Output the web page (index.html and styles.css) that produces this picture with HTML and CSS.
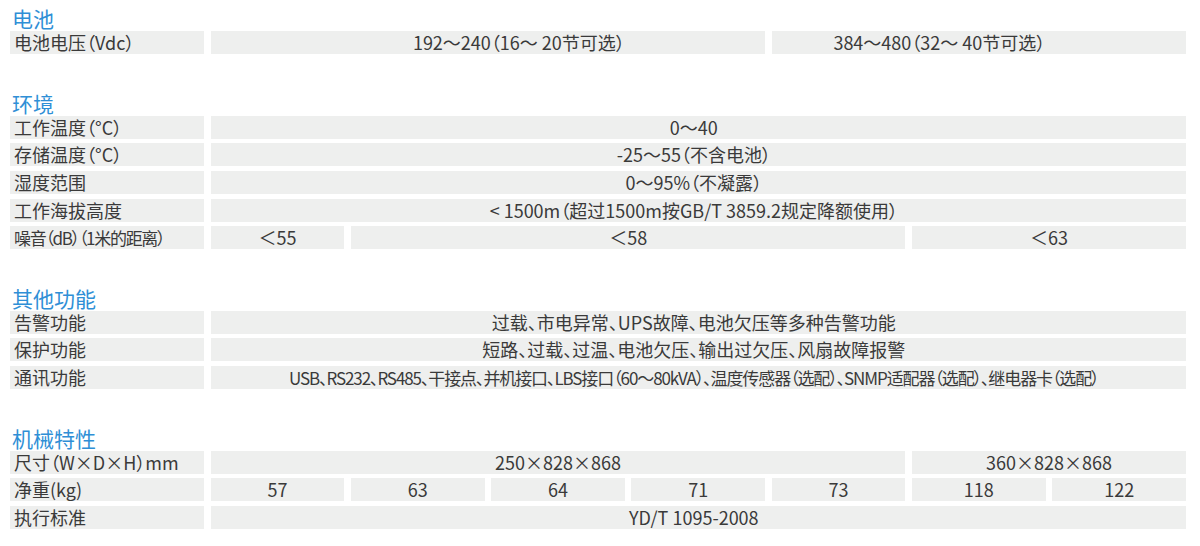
FILE: index.html
```html
<!DOCTYPE html>
<html lang="zh-CN">
<head>
<meta charset="utf-8">
<title>规格参数</title>
<link rel="stylesheet" href="styles.css">
</head>
<body>
<div class="spec">
  <section class="group">
    <h2 class="title">电池</h2>
    <div class="row">
      <div class="label">电池电压（Vdc）</div>
      <div class="cell s4 shift-r">192～240（16～ 20节可选）</div>
      <div class="cell s3 shift-l">384～480（32～ 40节可选）</div>
    </div>
  </section>

  <section class="group">
    <h2 class="title">环境</h2>
    <div class="row">
      <div class="label">工作温度（°C）</div>
      <div class="cell s7 full">0～40</div>
    </div>
    <div class="row">
      <div class="label">存储温度（°C）</div>
      <div class="cell s7 full">-25～55（不含电池）</div>
    </div>
    <div class="row">
      <div class="label">湿度范围</div>
      <div class="cell s7 full">0～95%（不凝露）</div>
    </div>
    <div class="row">
      <div class="label">工作海拔高度</div>
      <div class="cell s7 full">&lt; 1500m（超过1500m按GB/T 3859.2规定降额使用）</div>
    </div>
    <div class="row">
      <div class="label compact">噪音（dB）（1米的距离）</div>
      <div class="cell s1">＜55</div>
      <div class="cell s4">＜58</div>
      <div class="cell s2">＜63</div>
    </div>
  </section>

  <section class="group">
    <h2 class="title">其他功能</h2>
    <div class="row">
      <div class="label">告警功能</div>
      <div class="cell s7 full">过载、市电异常、UPS故障、电池欠压等多种告警功能</div>
    </div>
    <div class="row">
      <div class="label">保护功能</div>
      <div class="cell s7 full">短路、过载、过温、电池欠压、输出过欠压、风扇故障报警</div>
    </div>
    <div class="row">
      <div class="label">通讯功能</div>
      <div class="cell s7 full compact-cell">USB、RS232、RS485、干接点、并机接口、LBS接口（60～80kVA）、温度传感器（选配）、SNMP适配器（选配）、继电器卡（选配）</div>
    </div>
  </section>

  <section class="group">
    <h2 class="title">机械特性</h2>
    <div class="row">
      <div class="label">尺寸（W×D×H）mm</div>
      <div class="cell s5">250×828×868</div>
      <div class="cell s2">360×828×868</div>
    </div>
    <div class="row">
      <div class="label">净重(kg)</div>
      <div class="cell s1">57</div>
      <div class="cell s1">63</div>
      <div class="cell s1">64</div>
      <div class="cell s1">71</div>
      <div class="cell s1">73</div>
      <div class="cell s1">118</div>
      <div class="cell s1">122</div>
    </div>
    <div class="row">
      <div class="label">执行标准</div>
      <div class="cell s7 full">YD/T 1095-2008</div>
    </div>
  </section>
</div>
</body>
</html>
```

FILE: styles.css
```css
html, body {
  margin: 0;
  padding: 0;
  background: #ffffff;
}

body {
  font-family: "Noto Sans CJK SC", "Noto Sans", sans-serif;
  color: #3a3a3a;
  font-feature-settings: "palt";
}

.spec {
  width: 1176px;
  padding: 5px 0 0 10px;
}

.group + .group {
  margin-top: 35.5px;
}

.title {
  margin: 0;
  padding-left: 2px;
  font-size: 21px;
  line-height: 26px;
  font-weight: 400;
  color: #2f8fd6;
}

.row {
  display: grid;
  grid-template-columns: 194px repeat(7, 1fr);
  column-gap: 6.6px;
  margin-bottom: 4.7px;
}

.label,
.cell {
  height: 23px;
  line-height: 23px;
  font-size: 18px;
  background: #eeefee;
  white-space: nowrap;
}

.label {
  padding-left: 4px;
}

.label.compact {
  font-size: 17px;
  letter-spacing: -1.3px;
}

.cell {
  text-align: center;
}

.cell.compact-cell {
  font-size: 17px;
  letter-spacing: -1.1px;
}

.s1 { grid-column: span 1; }
.s2 { grid-column: span 2; }
.s3 { grid-column: span 3; }
.s4 { grid-column: span 4; }
.s5 { grid-column: span 5; }
.s7 { grid-column: span 7; }

.full {
  padding-right: 9px;
}

.shift-r {
  padding-left: 62px;
}

.shift-l {
  padding-right: 79px;
}
```
